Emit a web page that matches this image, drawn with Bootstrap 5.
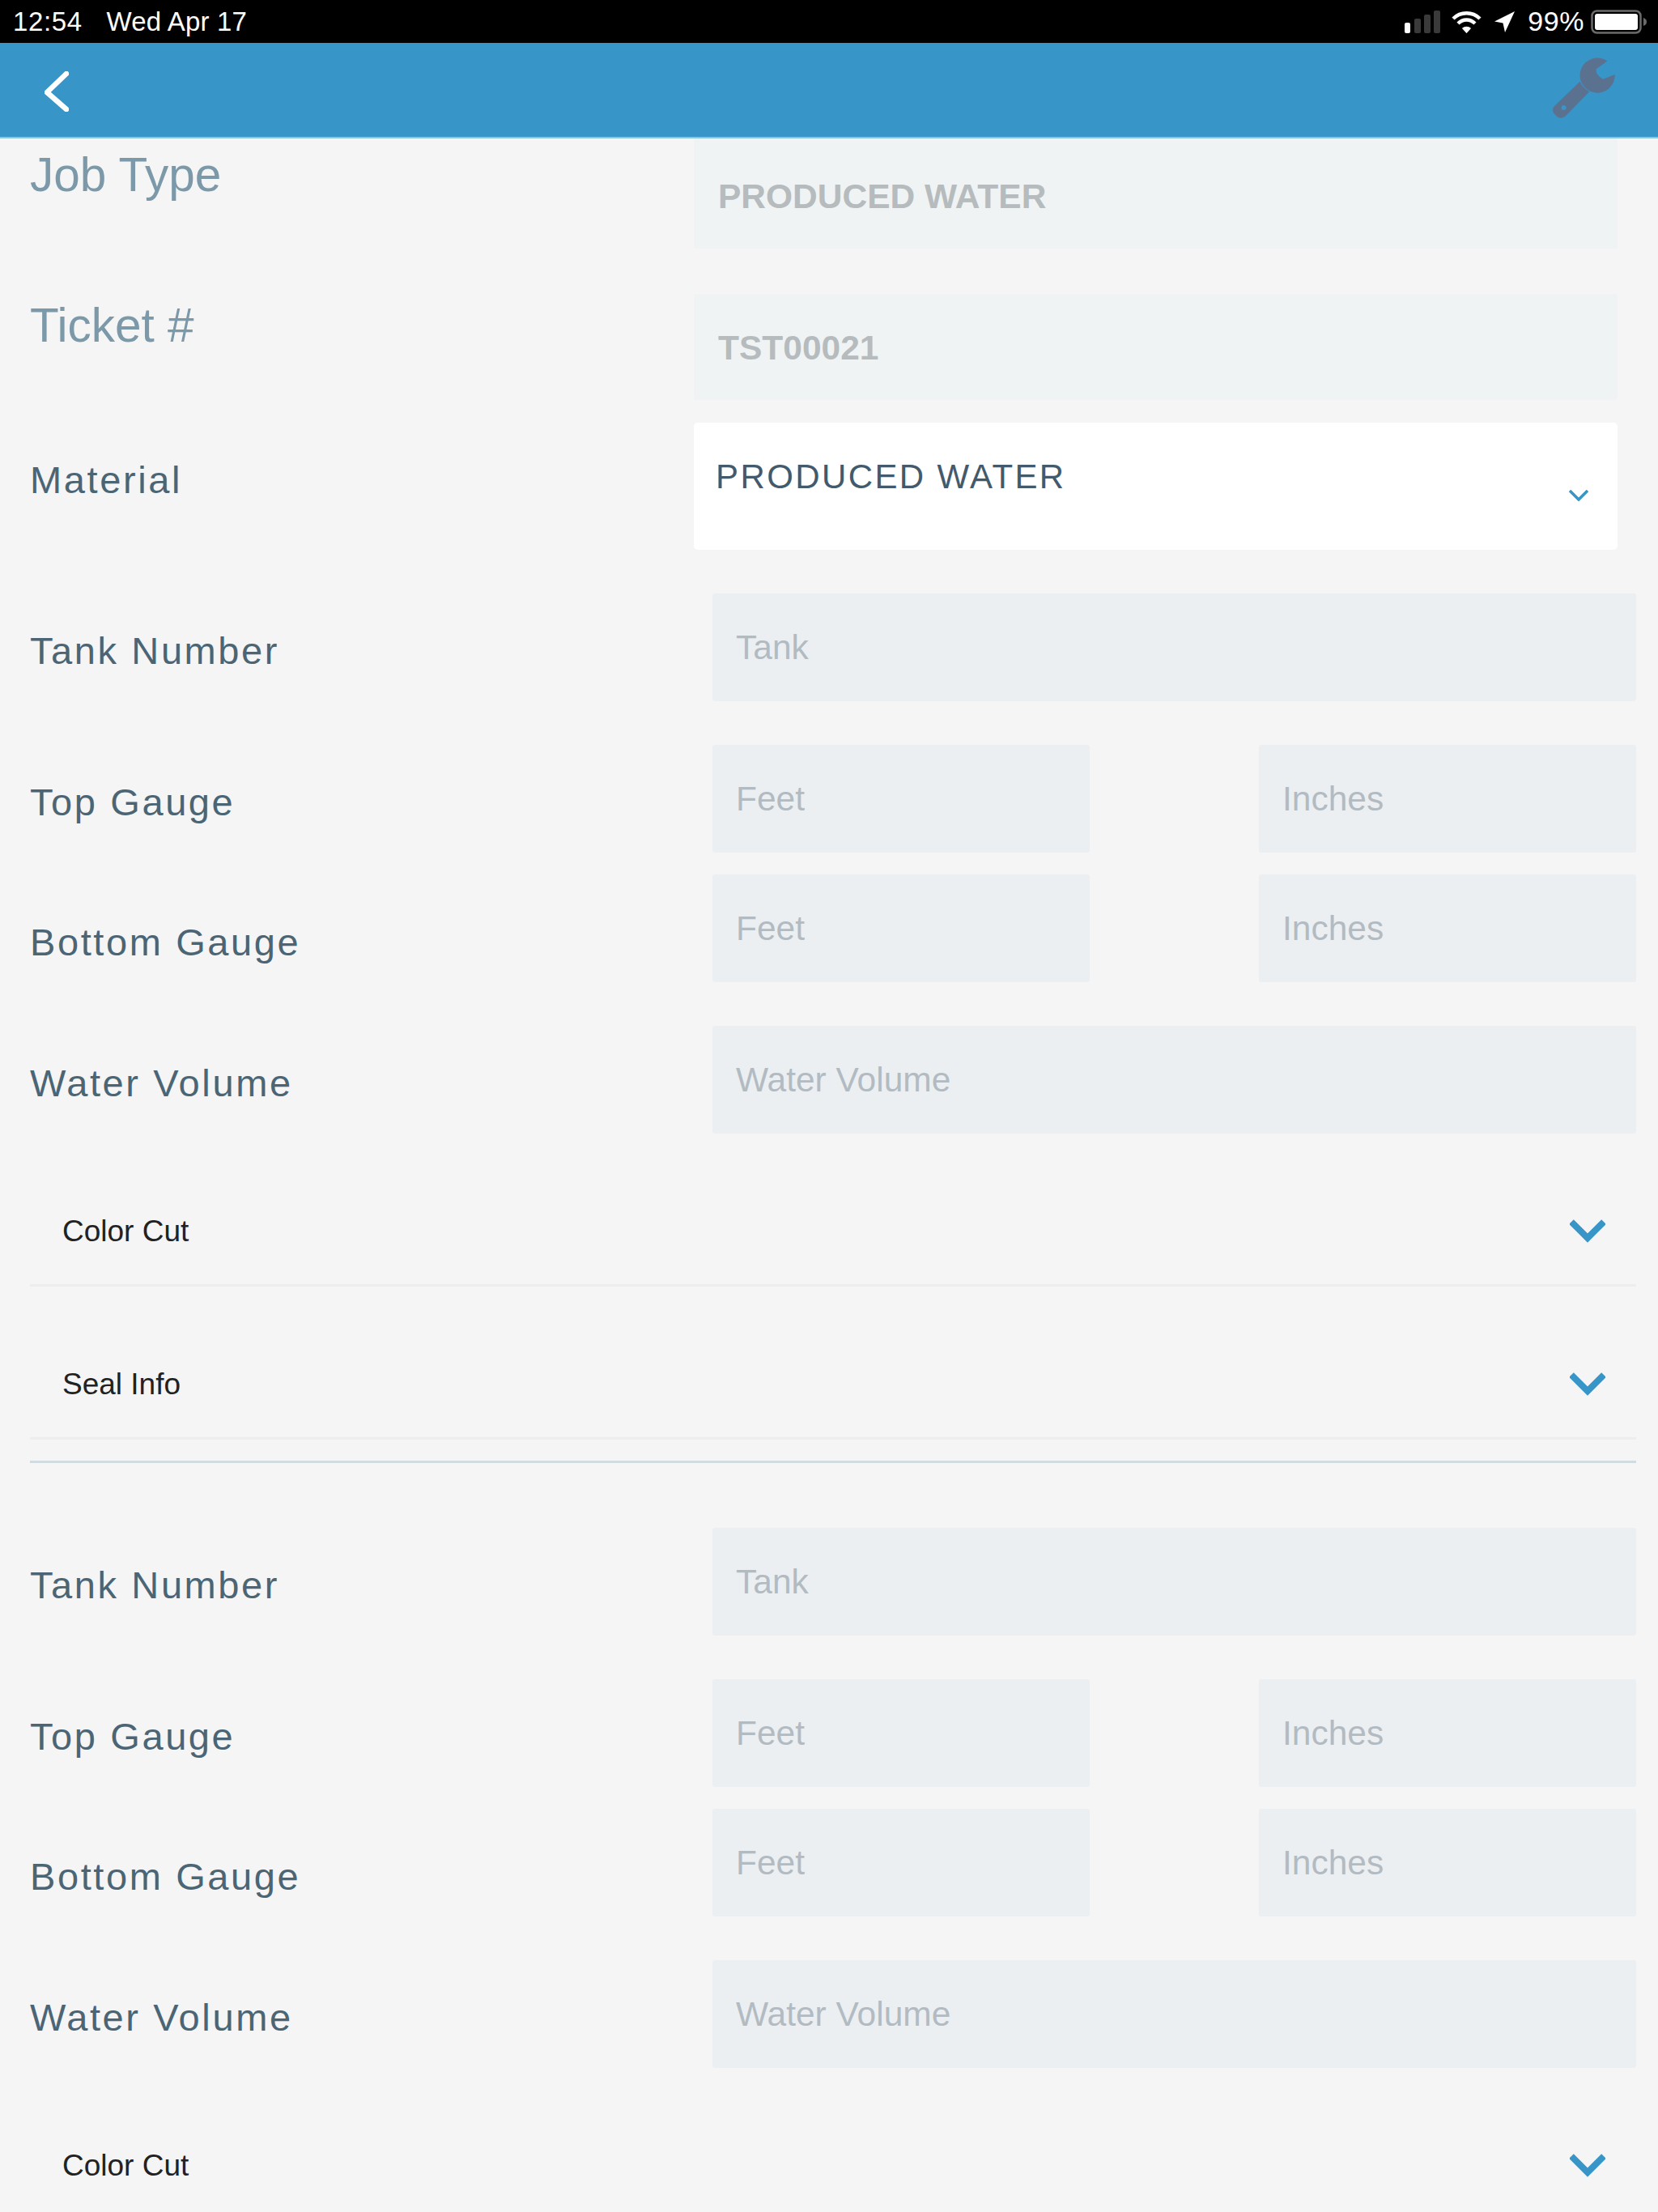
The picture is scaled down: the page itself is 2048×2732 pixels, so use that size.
<!DOCTYPE html>
<html lang="en">
<head>
    <meta charset="UTF-8">
    <meta name="viewport" content="width=device-width, initial-scale=1.0">
    <title>Tank Ticket</title>
    <link rel="stylesheet" href="https://cdn.jsdelivr.net/npm/bootstrap@5.3.0/dist/css/bootstrap.min.css">
    <style>
        html, body {
            height: 2732px;
            overflow: hidden;
        }
        body {
            background-color: #f5f5f5;
            font-family: "Liberation Sans", Arial, sans-serif;
        }
        .status-bar {
            height: 53px;
            background: #000;
            color: #fff;
            font-size: 33px;
            padding: 0 13px 0 16px;
            letter-spacing: .6px;
        }
        .status-date { margin-left: 30px; letter-spacing: .15px; }
        .status-battery { font-size: 34px; }
        .signal-icon { margin-right: -3px; }
        .app-bar {
            height: 118px;
            background: #3795c7;
            border-bottom: 2px solid #8cc4e0;
            padding: 0 50px 0 55px;
        }
        .back-icon { margin-top: 4px; }
        .tool-icon { margin-top: -7px; }
        .content { padding: 0 27px 0 37px; }
        .field-label {
            width: 843px;
            flex: none;
            font-size: 47px;
            letter-spacing: 2.6px;
            color: #4c6575;
            line-height: 1;
        }
        .label-top {
            width: 820px;
            font-size: 58.5px;
            letter-spacing: 0;
            color: #7c99a9;
            line-height: 68px;
        }
        .form-control.field-input {
            height: 133px;
            background: #ebeff2;
            border: 0;
            border-radius: 3px;
            box-shadow: none;
            font-size: 42.5px;
            padding: 0 29px;
            color: #4c6575;
        }
        .form-control.field-input::placeholder { color: #b3bbc2; opacity: 1; }
        .form-control.field-readonly {
            width: 1141px;
            height: 136px;
            background: #f0f3f3;
            color: #b6bbbe;
            font-weight: 700;
            padding: 8px 30px 0;
            font-size: 42.5px;
        }
        .form-control.field-ticket { height: 131px; padding-top: 2px; }
        .field-end { margin-right: 23px; }
        .field-wide { width: 1141px; }
        .field-half { width: 466px; }
        .select-box {
            width: 1141px;
            height: 157px;
            background: #fff;
            border-radius: 5px;
            padding: 46px 36px 0 27px;
            font-size: 42px;
            letter-spacing: 2.4px;
            color: #425a6b;
            line-height: 1;
        }
        .select-box svg { margin-top: 37px; }
        .collapse-row {
            height: 135px;
            margin-top: 54px;
            border-bottom: 3px solid #ededed;
            padding: 1px 38px 0 40px;
            font-size: 37px;
            color: #222;
        }
        .section-rule {
            height: 3px;
            margin: 26px 0 80px;
            background: #d1dce1;
        }
        .label-job { margin-top: 11px; }
        .ticket-row { margin-top: 56px; }
        .label-ticket { margin-top: 5px; }
        .label-material { width: 820px; margin-top: -17px; }
        .mt-27 { margin-top: 27px; }
        .mt-28 { margin-top: 28px; }
        .mt-54 { margin-top: 54px; }
        .label-shift-4 { padding-top: 8px; }
        .label-shift-17 { padding-top: 34px; }
    </style>
</head>
<body>

    <div class="status-bar d-flex align-items-center">
        <span>12:54</span>
        <span class="status-date">Wed Apr 17</span>
        <svg class="signal-icon ms-auto" width="45" height="28" viewBox="0 0 45 28">
            <rect x="0" y="15" width="7" height="13" rx="2" fill="#fff"/>
            <rect x="12" y="10" width="8" height="18" rx="2" fill="#3a3a3a"/>
            <rect x="24" y="5" width="8" height="23" rx="2" fill="#3a3a3a"/>
            <rect x="36" y="0" width="8" height="28" rx="2" fill="#3a3a3a"/>
        </svg>
        <svg class="ms-3" width="37" height="28" viewBox="0 0 37 28" fill="none" stroke="#fff" stroke-width="4.4">
            <path d="M2 10 C11 1 26 1 35 10"/>
            <path d="M8 16 C14 10 23 10 29 16"/>
            <path d="M14 22 C16 20 21 20 23 22 L18.5 27 Z" fill="#fff" stroke-width="1.5"/>
        </svg>
        <svg class="ms-3" width="25" height="26" viewBox="0 0 25 26">
            <path d="M25 0 L13 26 L10.5 14.5 L0 12.5 Z" fill="#fff"/>
        </svg>
        <span class="status-battery ms-3">99%</span>
        <svg class="ms-2" width="70" height="30" viewBox="0 0 70 30">
            <rect x="1.5" y="1.5" width="60" height="27" rx="6" fill="none" stroke="#6b6b6b" stroke-width="2.5"/>
            <rect x="5" y="5" width="53" height="20" rx="3" fill="#fff"/>
            <path d="M65 10 C68 11 69 13 69 15 C69 17 68 19 65 20 Z" fill="#6b6b6b"/>
        </svg>
    </div>

    <div class="app-bar d-flex align-items-center justify-content-between">
        <svg class="back-icon" width="30" height="50" viewBox="0 0 30 50" fill="none" stroke="#fff" stroke-width="6.5" stroke-linecap="round" stroke-linejoin="round">
            <path d="M27 3 L3 26 L27 47"/>
        </svg>
        <svg class="tool-icon" width="83" height="83" viewBox="700 200 250 250">
            <path fill="#5b7190" d="M912 228 A65 65 0 1 0 940 278 L896 296 Q884 290 877 280 Q868 268 871 258 Z"/>
            <path fill="#5b7190" fill-rule="evenodd" d="M810 305 Q822 330 845 342 L757 433 Q738 450 718 428 Q700 410 716 395 Z M750 393 A9 9 0 1 0 750 411 A9 9 0 1 0 750 393 Z"/>
        </svg>
    </div>

    <div class="content">
        <div class="d-flex align-items-start">
            <div class="field-label label-top label-job">Job Type</div>
            <input class="form-control field-input field-readonly ms-auto field-end" type="text" value="PRODUCED WATER" readonly>
        </div>
        <div class="d-flex align-items-start ticket-row">
            <div class="field-label label-top label-ticket">Ticket #</div>
            <input class="form-control field-input field-readonly field-ticket ms-auto field-end" type="text" value="TST00021" readonly>
        </div>
        <div class="d-flex align-items-center mt-28">
            <div class="field-label label-material">Material</div>
            <div class="select-box d-flex justify-content-between ms-auto field-end">
                <span>PRODUCED WATER</span>
                <svg width="24" height="14" viewBox="0 0 24 14" fill="none" stroke="#3795c7" stroke-width="3.5"><path d="M1 1 L12 12 L23 1"/></svg>
            </div>
        </div>

        <div class="d-flex align-items-center mt-54">
            <div class="field-label label-shift-4">Tank Number</div>
            <input class="form-control field-input field-wide" type="text" placeholder="Tank">
        </div>
        <div class="d-flex align-items-center mt-54">
            <div class="field-label label-shift-4">Top Gauge</div>
            <div class="field-wide d-flex justify-content-between">
                <input class="form-control field-input field-half" type="text" placeholder="Feet">
                <input class="form-control field-input field-half" type="text" placeholder="Inches">
            </div>
        </div>
        <div class="d-flex align-items-center mt-27">
            <div class="field-label label-shift-17">Bottom Gauge</div>
            <div class="field-wide d-flex justify-content-between">
                <input class="form-control field-input field-half" type="text" placeholder="Feet">
                <input class="form-control field-input field-half" type="text" placeholder="Inches">
            </div>
        </div>
        <div class="d-flex align-items-center mt-54">
            <div class="field-label label-shift-4">Water Volume</div>
            <input class="form-control field-input field-wide" type="text" placeholder="Water Volume">
        </div>

        <div class="collapse-row d-flex align-items-center justify-content-between">
            <span>Color Cut</span>
            <svg width="44" height="30" viewBox="0 0 44 30" fill="none" stroke="#3795c7" stroke-width="8"><path d="M2 3 L22 23 L42 3"/></svg>
        </div>
        <div class="collapse-row d-flex align-items-center justify-content-between">
            <span>Seal Info</span>
            <svg width="44" height="30" viewBox="0 0 44 30" fill="none" stroke="#3795c7" stroke-width="8"><path d="M2 3 L22 23 L42 3"/></svg>
        </div>
        <div class="section-rule"></div>

        <div class="d-flex align-items-center">
            <div class="field-label label-shift-4">Tank Number</div>
            <input class="form-control field-input field-wide" type="text" placeholder="Tank">
        </div>
        <div class="d-flex align-items-center mt-54">
            <div class="field-label label-shift-4">Top Gauge</div>
            <div class="field-wide d-flex justify-content-between">
                <input class="form-control field-input field-half" type="text" placeholder="Feet">
                <input class="form-control field-input field-half" type="text" placeholder="Inches">
            </div>
        </div>
        <div class="d-flex align-items-center mt-27">
            <div class="field-label label-shift-17">Bottom Gauge</div>
            <div class="field-wide d-flex justify-content-between">
                <input class="form-control field-input field-half" type="text" placeholder="Feet">
                <input class="form-control field-input field-half" type="text" placeholder="Inches">
            </div>
        </div>
        <div class="d-flex align-items-center mt-54">
            <div class="field-label label-shift-4">Water Volume</div>
            <input class="form-control field-input field-wide" type="text" placeholder="Water Volume">
        </div>

        <div class="collapse-row d-flex align-items-center justify-content-between">
            <span>Color Cut</span>
            <svg width="44" height="30" viewBox="0 0 44 30" fill="none" stroke="#3795c7" stroke-width="8"><path d="M2 3 L22 23 L42 3"/></svg>
        </div>
    </div>

    <script src="https://cdn.jsdelivr.net/npm/bootstrap@5.3.0/dist/js/bootstrap.bundle.min.js"></script>
</body>
</html>
